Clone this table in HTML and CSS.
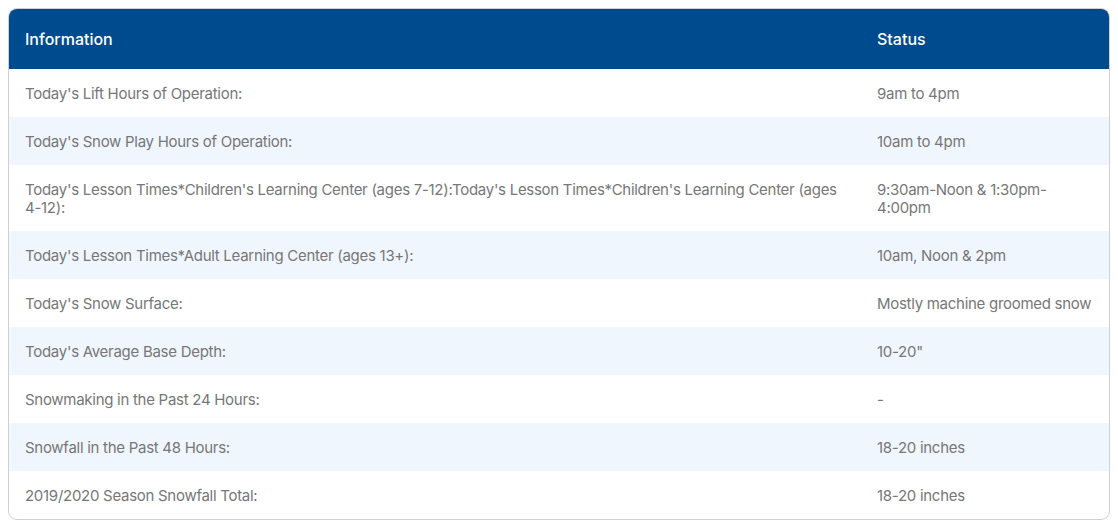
FILE: index.html
```html
<!DOCTYPE html>
<html lang="en">
<head>
<meta charset="utf-8">
<title>Conditions</title>
<link rel="stylesheet" href="styles.css">
</head>
<body>
<div class="card">
  <table class="report">
    <colgroup><col class="col-info"><col class="col-status"></colgroup>
    <thead>
      <tr><th>Information</th><th>Status</th></tr>
    </thead>
    <tbody>
      <tr><td>Today's Lift Hours of Operation:</td><td>9am to 4pm</td></tr>
      <tr><td>Today's Snow Play Hours of Operation:</td><td>10am to 4pm</td></tr>
      <tr><td>Today's Lesson Times*Children's Learning Center (ages 7-12):Today's Lesson Times*Children's Learning Center (ages 4-12):</td><td>9:30am-Noon &amp; 1:30pm-4:00pm</td></tr>
      <tr><td>Today's Lesson Times*Adult Learning Center (ages 13+):</td><td>10am, Noon &amp; 2pm</td></tr>
      <tr><td>Today's Snow Surface:</td><td>Mostly machine groomed snow</td></tr>
      <tr><td>Today's Average Base Depth:</td><td>10-20"</td></tr>
      <tr><td>Snowmaking in the Past 24 Hours:</td><td>-</td></tr>
      <tr><td>Snowfall in the Past 48 Hours:</td><td>18-20 inches</td></tr>
      <tr><td>2019/2020 Season Snowfall Total:</td><td>18-20 inches</td></tr>
    </tbody>
  </table>
</div>
</body>
</html>
```
FILE: styles.css
```css
html, body { background: #ffffff; }
body {
  margin: 8px;
  font-family: Inter, "Noto Sans", sans-serif;
}
.card {
  border: 1px solid #d0d0d0;
  border-radius: 9px;
  overflow: hidden;
}
.report {
  width: 100%;
  border-collapse: collapse;
  table-layout: fixed;
}
.col-status { width: 248px; }
.report th {
  background: #004b8d;
  color: #ffffff;
  font-weight: 500;
  font-size: 16px;
  line-height: 20px;
  text-align: left;
  padding: 20px 16px;
}
.report td {
  color: #777777;
  font-size: 15px;
  line-height: 18px;
  letter-spacing: -0.28px;
  padding: 16px 16px 14px;
  vertical-align: top;
}
.report tbody tr:nth-child(even) td { background: #f0f6fe; }
```
